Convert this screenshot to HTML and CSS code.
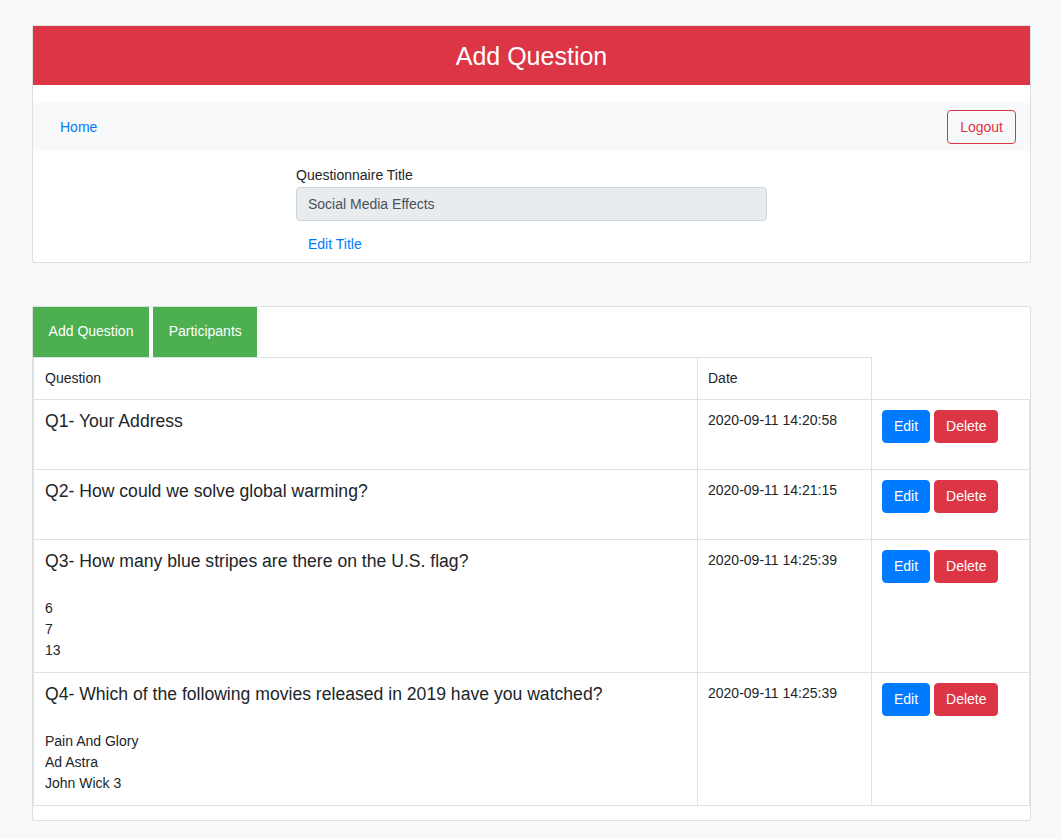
FILE: index.html
```html
<!DOCTYPE html>
<html lang="en">
<head>
<meta charset="utf-8">
<title>Add Question</title>
<link rel="stylesheet" href="styles.css">
</head>
<body>
<div class="page">
  <section class="card">
    <h1 class="banner">Add Question</h1>
    <nav class="navbar">
      <a class="nav-link" href="#">Home</a>
      <button class="btn btn-outline-danger">Logout</button>
    </nav>
    <div class="title-form">
      <label class="form-label">Questionnaire Title</label>
      <div class="form-control">Social Media Effects</div>
      <a class="btn-link" href="#">Edit Title</a>
    </div>
  </section>

  <section class="card card-questions">
    <div class="tabs">
      <a class="tab" href="#">Add Question</a>
      <a class="tab" href="#">Participants</a>
    </div>
    <table class="qtable">
      <thead>
        <tr>
          <th class="col-q">Question</th>
          <th class="col-d">Date</th>
        </tr>
      </thead>
      <tbody>
        <tr>
          <td class="col-q"><div class="qtitle">Q1- Your Address</div></td>
          <td class="col-d">2020-09-11 14:20:58</td>
          <td class="col-a"><button class="btn btn-primary">Edit</button> <button class="btn btn-danger">Delete</button></td>
        </tr>
        <tr>
          <td class="col-q"><div class="qtitle">Q2- How could we solve global warming?</div></td>
          <td class="col-d">2020-09-11 14:21:15</td>
          <td class="col-a"><button class="btn btn-primary">Edit</button> <button class="btn btn-danger">Delete</button></td>
        </tr>
        <tr>
          <td class="col-q">
            <div class="qtitle">Q3- How many blue stripes are there on the U.S. flag?</div>
            <div class="option">6</div>
            <div class="option">7</div>
            <div class="option">13</div>
          </td>
          <td class="col-d">2020-09-11 14:25:39</td>
          <td class="col-a"><button class="btn btn-primary">Edit</button> <button class="btn btn-danger">Delete</button></td>
        </tr>
        <tr>
          <td class="col-q">
            <div class="qtitle">Q4- Which of the following movies released in 2019 have you watched?</div>
            <div class="option">Pain And Glory</div>
            <div class="option">Ad Astra</div>
            <div class="option">John Wick 3</div>
          </td>
          <td class="col-d">2020-09-11 14:25:39</td>
          <td class="col-a"><button class="btn btn-primary">Edit</button> <button class="btn btn-danger">Delete</button></td>
        </tr>
      </tbody>
    </table>
  </section>
</div>
</body>
</html>
```

FILE: styles.css
```css
* { box-sizing: border-box; }

html, body {
  margin: 0;
  background: #f8f9fa;
  font-family: "Liberation Sans", Arial, sans-serif;
  font-size: 14px;
  line-height: 21px;
  color: #212529;
}

.page {
  padding: 25px 30px 18px 32px;
}

.card {
  background: #fff;
  border: 1px solid rgba(0, 0, 0, 0.125);
  border-radius: 3px;
}

.banner {
  margin: 0;
  background: #dc3545;
  color: #fff;
  font-weight: normal;
  font-size: 25px;
  line-height: 30px;
  padding: 15px 0 14px;
  text-align: center;
}

.navbar {
  margin-top: 18px;
  height: 48px;
  background: #f8f9fa;
  display: flex;
  align-items: center;
  justify-content: space-between;
  padding: 0 14px 0 27px;
}

.nav-link {
  color: #007bff;
  text-decoration: none;
}

.btn {
  font-family: inherit;
  font-size: 14px;
  line-height: 21px;
  padding: 5px 11px;
  border: 1px solid transparent;
  border-radius: 4px;
  cursor: pointer;
  vertical-align: top;
}

.btn-outline-danger {
  background: transparent;
  color: #dc3545;
  border-color: #dc3545;
  line-height: 20px;
  padding: 6px 12px;
}

.btn-primary {
  background: #007bff;
  border-color: #007bff;
  color: #fff;
}

.btn-danger {
  background: #dc3545;
  border-color: #dc3545;
  color: #fff;
}

.title-form {
  width: 471px;
  margin: 0 auto;
  padding-top: 14px;
}

.form-label {
  display: block;
  margin-bottom: 1px;
}

.form-control {
  height: 34px;
  background: #e9ecef;
  border: 1px solid #ced4da;
  border-radius: 4px;
  padding: 6px 11px;
  line-height: 20px;
  color: #495057;
  margin-bottom: 6px;
}

.btn-link {
  display: inline-block;
  color: #007bff;
  text-decoration: none;
  padding: 7px 12px 6px;
  line-height: 21px;
  height: 35px;
}

.card-questions {
  margin-top: 43px;
}

.tabs {
  display: flex;
  gap: 4px;
}

.tab {
  display: block;
  background: #4caf50;
  color: #fff;
  text-decoration: none;
  padding: 14px 15.6px 15px;
  line-height: 21px;
}

.qtable {
  width: 100%;
  border-collapse: collapse;
  margin-bottom: 14px;
}

.qtable th,
.qtable td {
  border: 1px solid #dee2e6;
  padding: 10px 11px 11px 11px;
  text-align: left;
  vertical-align: top;
  font-weight: normal;
}

.qtable th {
  padding-bottom: 10px;
}

.qtable .col-d,
.qtable .col-a {
  padding-left: 10px;
}

.col-q { width: 664px; }
.col-d { width: 174px; }

.qtitle {
  font-size: 17.6px;
  line-height: 22px;
  margin-bottom: 26px;
}

.option {
  line-height: 21px;
}
```
